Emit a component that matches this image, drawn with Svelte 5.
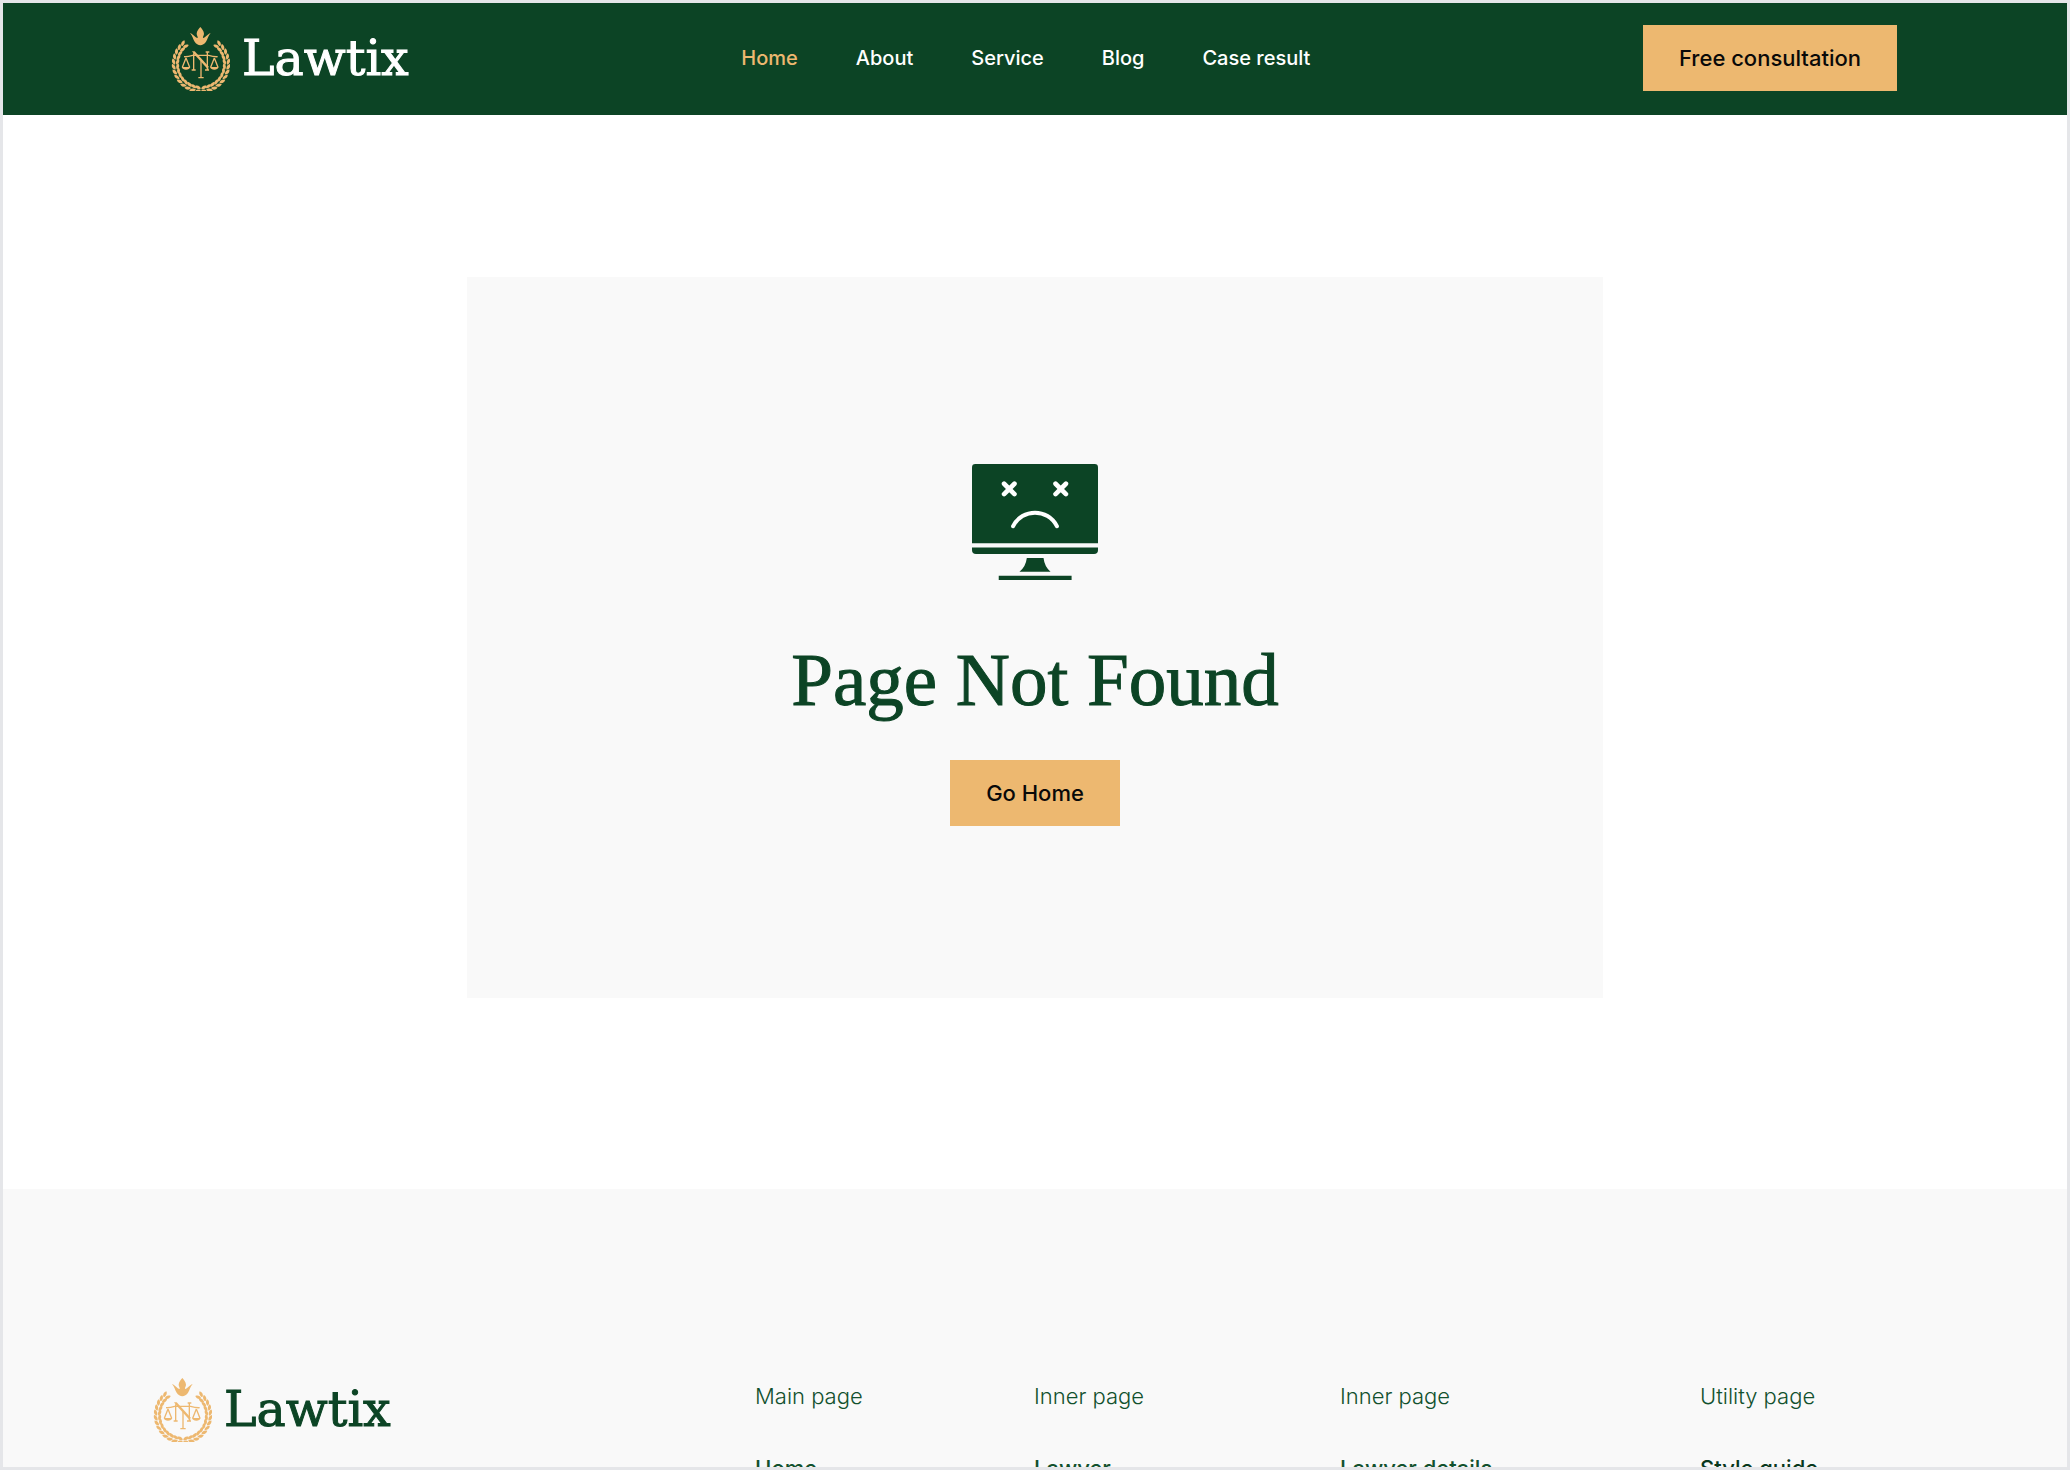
<script lang="ts">
	const navLinks = ['Home', 'About', 'Service', 'Blog', 'Case result'];

	const footerColumns = [
		{ title: 'Main page', link: 'Home' },
		{ title: 'Inner page', link: 'Lawyer' },
		{ title: 'Inner page', link: 'Lawyer details' },
		{ title: 'Utility page', link: 'Style guide' }
	];

	// leaf pairs of the laurel, in degrees away from the bottom of the ring
	const leaves = Array.from({ length: 13 }, (_, i) => 5 + i * 11);
</script>

{#snippet logo()}
	<svg class="emblem" viewBox="33 30 177 195" aria-hidden="true">
		{#each [1, -1] as side}
			<g transform="translate(123 144) scale({side} 1)">
				{#each leaves as angle}
					<g transform="rotate({-angle}) translate(0 76)">
						<path d="M-6 2C-1 0 9 1 12 10C4 14-5 10-6 2Z" />
						<path d="M-6-2C-4-9 4-13 12-9C9-1 1 1-6-2Z" />
					</g>
				{/each}
			</g>
		{/each}
		<path
			d="M121 33C125 38 132 45 132 53C132 58 128 61 129 66C137 65 142 55 152 51C144 59 143 70 138 77C134 84 127 86 121 88C115 86 108 84 104 77C99 70 98 59 90 51C100 55 105 65 113 66C114 61 110 58 110 53C110 45 117 38 121 33Z"
		/>
		<path
			class="line"
			d="M72 122Q82 123 98 118H146Q162 123 173 122M142 107V161M137 108H148M101 112V161M95 162H107M123 134V184M115 185H131M135 162H147"
		/>
		<path d="M96 106H104L145 151V161L104 116Z" />
		<path class="line" d="M78 126L67 154M78 126L89 154M163 126L152 154M163 126L174 154" />
		<path d="M65 153H91Q88 161 78 161Q68 161 65 153ZM150 153H176Q173 161 163 161Q153 161 150 153Z" />
	</svg>
	<span>Lawtix</span>
{/snippet}

<div class="page">
	<header>
		<a class="logo" href="/">{@render logo()}</a>
		<nav>
			{#each navLinks as label, i}
				<a class:active={i === 0} href="/">{label}</a>
			{/each}
		</nav>
		<a class="button" href="/">Free consultation</a>
	</header>

	<main>
		<section class="card">
			<svg class="monitor" viewBox="64 72 377 347" aria-hidden="true">
				<path d="M64 309V82Q64 72 74 72H431Q441 72 441 82V309Z" />
				<path d="M64 322H441V329Q441 341 429 341H76Q64 341 64 329Z" />
				<path d="M228 353H278Q281 379 299 394H206Q225 379 228 353Z" />
				<path d="M144 406H362V419H144Z" />
				<path class="face" d="M160 131L191 162M191 131L160 162M314 131L345 162M345 131L314 162" />
				<path class="face mouth" d="M187 258C214 204 291 204 318 258" />
			</svg>
			<h1>Page Not Found</h1>
			<a class="button" href="/">Go Home</a>
		</section>
	</main>

	<footer>
		<a class="logo dark" href="/">{@render logo()}</a>
		{#each footerColumns as column}
			<div class="column">
				<h2>{column.title}</h2>
				<a href="/">{column.link}</a>
			</div>
		{/each}
	</footer>
</div>

<style>
	:global(body) {
		background: #fff;
	}

	.page {
		--green: #0c4425;
		--gold: #edb870;
		--light: #f9f9f9;

		box-sizing: border-box;
		height: 100vh;
		overflow: hidden;
		border: 3px solid #e5e6e9;
		font-family: Inter, 'Liberation Sans', sans-serif;
	}

	a {
		text-decoration: none;
		color: inherit;
	}

	header {
		display: flex;
		align-items: center;
		justify-content: space-between;
		box-sizing: border-box;
		height: 112px;
		padding: 0 170px 2px 168px;
		background: var(--green);
		color: #fff;
	}

	.logo {
		display: flex;
		align-items: center;
		align-self: start;
		gap: 12px;
		font-family: 'DejaVu Serif', serif;
		font-size: 49px;
		line-height: 65px;
		color: #fff;
		-webkit-text-stroke: 1px currentColor;
	}

	header .logo {
		align-self: center;
	}

	.logo.dark {
		color: var(--green);
	}

	.emblem {
		width: 59px;
		height: 65px;
		fill: var(--gold);
	}

	.emblem .line {
		fill: none;
		stroke: var(--gold);
		stroke-width: 4;
	}

	nav {
		display: flex;
		gap: 58px;
		font-size: 20px;
		font-weight: 500;
		line-height: 28px;
	}

	nav .active {
		color: var(--gold);
	}

	.button {
		padding: 19px 36px;
		background: var(--gold);
		font-size: 22px;
		font-weight: 500;
		line-height: 28px;
		color: #090909;
	}

	main {
		padding: 162px 0 191px;
		background: #fff;
	}

	.card {
		display: flex;
		flex-direction: column;
		align-items: center;
		box-sizing: border-box;
		width: 55%;
		margin: 0 auto;
		padding: 187px 40px 172px;
		background: var(--light);
	}

	.monitor {
		width: 126px;
		height: 116px;
		fill: var(--green);
	}

	.face {
		fill: none;
		stroke: #fff;
		stroke-width: 14;
		stroke-linecap: round;
	}

	.mouth {
		stroke-width: 12;
	}

	h1 {
		margin: 56px 0 36px;
		font-family: 'Liberation Serif', serif;
		font-size: 75px;
		font-weight: 400;
		line-height: 88px;
		color: var(--green);
		-webkit-text-stroke: 1px var(--green);
	}

	footer {
		display: grid;
		grid-template-columns: 602fr 279fr 306fr 360fr 213fr;
		padding: 188px 154px 188px 150px;
		background: var(--light);
	}

	.column {
		display: flex;
		flex-direction: column;
		gap: 44px;
		padding-top: 5px;
		font-size: 22px;
		line-height: 28px;
		color: #12512e;
	}

	.column a {
		font-weight: 500;
	}

	.column:last-child a {
		color: #08371c;
	}

	h2 {
		margin: 0;
		font-size: inherit;
		font-weight: 300;
	}
</style>
